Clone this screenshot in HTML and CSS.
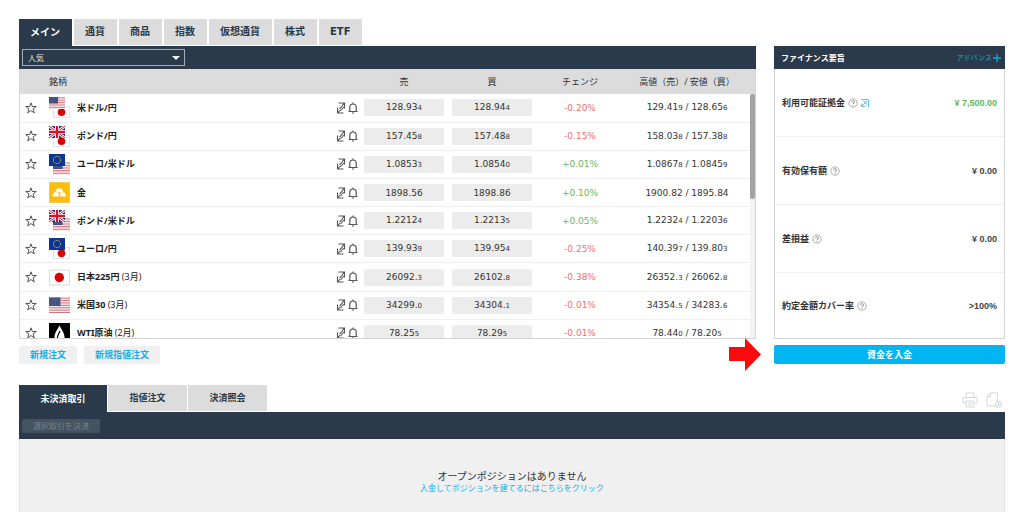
FILE: index.html
```html
<!DOCTYPE html>
<html lang="ja">
<head>
<meta charset="utf-8">
<title>トレード</title>
<link rel="stylesheet" href="styles.css">
</head>
<body>
<svg class="defs" aria-hidden="true">
  <symbol id="star" viewBox="0 0 12 12"><path d="M6 .8l1.300 3.700h4L8.100 6.900l1.200 4L6 8.600l-3.300 2.300 1.200-4L.7 4.500h4z" fill="none" stroke="#444" stroke-width=".9"/></symbol>
  <symbol id="expand" viewBox="0 0 10 12"><path d="M2.500 1h6v5.500M8.500 1L6.200 3.600M1.500 5.500V11h6M1.500 11l2.300-2.600M3.500 7.200l3-3.400M4.300 9L8 5" fill="none" stroke="#555" stroke-width="1.100"/></symbol>
  <symbol id="bell" viewBox="0 0 10 12"><path d="M.5 9.500h9M1.800 9.300V5.200a3.200 3.200 0 0 1 6.400 0v4.100M5 .5v1.500M4 11h2" fill="none" stroke="#555" stroke-width="1.200"/></symbol>
  <symbol id="us" viewBox="0 0 16 12"><path fill="#f3e4e6" d="M0 0h16v12H0z"/><path d="M0 .8h16M0 3.200h16M0 5.600h16M0 8h16M0 10.400h16" stroke="#d87f87"/><path fill="#3f4f7d" d="M0 0h9v6.500H0z"/><path d="M1 1.500h7.500M1 3.300h7.500M1 5.100h7.500" stroke="#67749a" stroke-width=".6" stroke-dasharray=".7 .8"/></symbol>
  <symbol id="jp" viewBox="0 0 17 12"><path fill="#fff" stroke="#d8d8de" stroke-width=".8" d="M.4.4h16.200v11.200H.4z"/><circle cx="8.500" cy="6.300" r="3.800" fill="#d80000"/></symbol>
  <symbol id="gb" viewBox="0 0 16 12"><path fill="#1c2f83" d="M0 0h16v12H0z"/><path d="M0 0l16 12M16 0L0 12" stroke="#fff" stroke-width="2.800"/><path d="M0 0l16 12M16 0L0 12" stroke="#d4142c" stroke-width="1"/><path d="M8 0v12M0 6h16" stroke="#fff" stroke-width="4"/><path d="M8 0v12M0 6h16" stroke="#d4142c" stroke-width="2.300"/></symbol>
  <symbol id="eu" viewBox="0 0 16 12"><path fill="#0a3596" d="M0 0h16v12H0z"/><circle cx="8" cy="6" r="3.600" fill="none" stroke="#c9bd3c" stroke-width="1" stroke-dasharray="1.300 .58"/></symbol>
  <symbol id="usd-jpy" viewBox="0 0 21 21"><use href="#jp" x="4" y="9" width="17" height="12"/><use href="#us" width="16" height="12"/></symbol>
  <symbol id="gbp-jpy" viewBox="0 0 21 21"><use href="#jp" x="4" y="9" width="17" height="12"/><use href="#gb" width="16" height="12"/></symbol>
  <symbol id="eur-jpy" viewBox="0 0 21 21"><use href="#jp" x="4" y="9" width="17" height="12"/><use href="#eu" width="16" height="12"/></symbol>
  <symbol id="eur-usd" viewBox="0 0 21 21"><use href="#us" x="4" y="8" width="17" height="13"/><use href="#eu" width="16" height="12"/></symbol>
  <symbol id="gbp-usd" viewBox="0 0 21 21"><use href="#us" x="4" y="8" width="17" height="13"/><use href="#gb" width="16" height="12"/></symbol>
  <symbol id="gold" viewBox="0 0 21 21"><path fill="#fdbd0b" stroke="#dcc58a" stroke-width=".5" d="M.2.2h20.600v20.600H.2z"/><path fill="#fff" d="M8 6.500h4.500l2 3.500H6.300zM5 10.300h4.300l1.200 4.200H3.300zM11 10.300h4.400l1.800 4.200h-5.700z"/></symbol>
  <symbol id="japan" viewBox="0 0 21 21"><path fill="#fff" stroke="#d4d4da" stroke-width=".9" d="M.5 3h20v15H.5z"/><circle cx="10.300" cy="10.500" r="4.700" fill="#d80000"/></symbol>
  <symbol id="usa" viewBox="0 0 21 21"><path fill="#f5e9eb" d="M0 2.500h21V18H0z"/><path d="M0 3.100h21M0 5.500h21M0 7.900h21M0 10.300h21M0 12.700h21M0 15.100h21M0 17.500h21" stroke="#d07880"/><path fill="#3f4f7d" d="M0 2.500h11.500V11H0z"/><path d="M1 4h10M1 5.700h10M1 7.400h10M1 9.100h10" stroke="#7481a5" stroke-width=".6" stroke-dasharray=".8 1"/></symbol>
  <symbol id="oil" viewBox="0 0 21 21"><path fill="#000" d="M0 0h21v21H0z"/><path fill="#fff" d="M10.500 2.500C12 6 15.500 10 15.500 14a5 5 0 0 1-10 0c0-4 3.500-8 5-11.500z"/><path d="M11 8c-1 3-3 4-2.500 8" fill="none" stroke="#000" stroke-width="1.200"/></symbol>
  <symbol id="help" viewBox="0 0 10 10"><circle cx="5" cy="5" r="4.200" fill="none" stroke="#999" stroke-width=".8"/><path d="M3.600 4.100c0-1.900 2.900-1.800 2.900-.1 0 1-1.400 1-1.400 2.100M5.100 6.900v.9" fill="none" stroke="#777" stroke-width=".9"/></symbol>
</svg>

<main class="page">
  <section class="market">
    <nav class="tabs">
      <button class="tab active">メイン</button><button class="tab">通貨</button><button class="tab">商品</button><button class="tab">指数</button><button class="tab">仮想通貨</button><button class="tab">株式</button><button class="tab">ETF</button>
    </nav>
    <div class="bar filter">
      <div class="picker">
        <select aria-label="カテゴリー"><option>人気</option></select>
        <svg class="caret" viewBox="0 0 8 4"><path fill="#fff" d="M0 0h8L4 4z"/></svg>
      </div>
    </div>
    <div class="list">
      <table class="quotes">
        <colgroup><col class="c-star"><col><col class="c-tools"><col class="c-price"><col class="c-price"><col class="c-change"><col class="c-range"></colgroup>
        <thead><tr><th></th><th class="name">銘柄</th><th></th><th>売</th><th>買</th><th>チェンジ</th><th>高値（売）/ 安値（買）</th></tr></thead>
        <tbody>
          <tr><td><svg class="star"><use href="#star"/></svg></td><td class="name"><div class="asset"><svg class="flag"><use href="#usd-jpy"/></svg><b>米ドル/円</b></div></td><td><div class="tools"><svg><use href="#expand"/></svg><svg><use href="#bell"/></svg></div></td><td><button class="price">128.93<small>4</small></button></td><td><button class="price">128.94<small>4</small></button></td><td class="down">-0.20%</td><td>129.41<small>9</small> / 128.65<small>6</small></td></tr>
          <tr><td><svg class="star"><use href="#star"/></svg></td><td class="name"><div class="asset"><svg class="flag"><use href="#gbp-jpy"/></svg><b>ポンド/円</b></div></td><td><div class="tools"><svg><use href="#expand"/></svg><svg><use href="#bell"/></svg></div></td><td><button class="price">157.45<small>8</small></button></td><td><button class="price">157.48<small>8</small></button></td><td class="down">-0.15%</td><td>158.03<small>8</small> / 157.38<small>8</small></td></tr>
          <tr><td><svg class="star"><use href="#star"/></svg></td><td class="name"><div class="asset"><svg class="flag"><use href="#eur-usd"/></svg><b>ユーロ/米ドル</b></div></td><td><div class="tools"><svg><use href="#expand"/></svg><svg><use href="#bell"/></svg></div></td><td><button class="price">1.0853<small>3</small></button></td><td><button class="price">1.0854<small>0</small></button></td><td class="up">+0.01%</td><td>1.0867<small>8</small> / 1.0845<small>9</small></td></tr>
          <tr><td><svg class="star"><use href="#star"/></svg></td><td class="name"><div class="asset"><svg class="flag"><use href="#gold"/></svg><b>金</b></div></td><td><div class="tools"><svg><use href="#expand"/></svg><svg><use href="#bell"/></svg></div></td><td><button class="price">1898.56</button></td><td><button class="price">1898.86</button></td><td class="up">+0.10%</td><td>1900.82 / 1895.84</td></tr>
          <tr><td><svg class="star"><use href="#star"/></svg></td><td class="name"><div class="asset"><svg class="flag"><use href="#gbp-usd"/></svg><b>ポンド/米ドル</b></div></td><td><div class="tools"><svg><use href="#expand"/></svg><svg><use href="#bell"/></svg></div></td><td><button class="price">1.2212<small>4</small></button></td><td><button class="price">1.2213<small>5</small></button></td><td class="up">+0.05%</td><td>1.2232<small>4</small> / 1.2203<small>6</small></td></tr>
          <tr><td><svg class="star"><use href="#star"/></svg></td><td class="name"><div class="asset"><svg class="flag"><use href="#eur-jpy"/></svg><b>ユーロ/円</b></div></td><td><div class="tools"><svg><use href="#expand"/></svg><svg><use href="#bell"/></svg></div></td><td><button class="price">139.93<small>9</small></button></td><td><button class="price">139.95<small>4</small></button></td><td class="down">-0.25%</td><td>140.39<small>7</small> / 139.80<small>3</small></td></tr>
          <tr><td><svg class="star"><use href="#star"/></svg></td><td class="name"><div class="asset"><svg class="flag"><use href="#japan"/></svg><span><b>日本225円</b> (3月)</span></div></td><td><div class="tools"><svg><use href="#expand"/></svg><svg><use href="#bell"/></svg></div></td><td><button class="price">26092.<small>3</small></button></td><td><button class="price">26102.<small>8</small></button></td><td class="down">-0.38%</td><td>26352.<small>3</small> / 26062.<small>8</small></td></tr>
          <tr><td><svg class="star"><use href="#star"/></svg></td><td class="name"><div class="asset"><svg class="flag"><use href="#usa"/></svg><span><b>米国30</b> (3月)</span></div></td><td><div class="tools"><svg><use href="#expand"/></svg><svg><use href="#bell"/></svg></div></td><td><button class="price">34299.<small>0</small></button></td><td><button class="price">34304.<small>1</small></button></td><td class="down">-0.01%</td><td>34354.<small>5</small> / 34283.<small>6</small></td></tr>
          <tr><td><svg class="star"><use href="#star"/></svg></td><td class="name"><div class="asset"><svg class="flag"><use href="#oil"/></svg><span><b>WTI原油</b> (2月)</span></div></td><td><div class="tools"><svg><use href="#expand"/></svg><svg><use href="#bell"/></svg></div></td><td><button class="price">78.25<small>5</small></button></td><td><button class="price">78.29<small>5</small></button></td><td class="down">-0.01%</td><td>78.44<small>0</small> / 78.20<small>5</small></td></tr>
        </tbody>
      </table>
      <div class="track"><div class="thumb"></div></div>
    </div>
    <div class="orders">
      <button class="order">新規注文</button>
      <button class="order">新規指値注文</button>
      <svg class="pointer" viewBox="0 0 32 33"><path fill="#fa0a0a" d="M0 9h16V0l16 16.500L16 33v-10H0z"/></svg>
    </div>
  </section>

  <aside class="finance">
    <div class="bar finance-head"><b>ファイナンス要旨</b><button class="advance">アドバンス<svg viewBox="0 0 8 8"><path d="M4 0v8M0 4h8" stroke="#1ba4de" stroke-width="1.300"/></svg></button></div>
    <dl class="summary">
      <div class="item"><dt>利用可能証拠金<svg class="help"><use href="#help"/></svg><svg class="jump" viewBox="0 0 8 8"><path d="M0 .6h7.400V8M0 7.400h4.500M.6 4.500v3M1 7l4-4M2.300 2.900h2.800v2.800" fill="none" stroke="#45b9ea" stroke-width=".9"/></svg></dt><dd class="gain">¥ 7,500.00</dd></div>
      <div class="item"><dt>有効保有額<svg class="help"><use href="#help"/></svg></dt><dd>¥ 0.00</dd></div>
      <div class="item"><dt>差損益<svg class="help"><use href="#help"/></svg></dt><dd>¥ 0.00</dd></div>
      <div class="item last"><dt>約定金額カバー率<svg class="help"><use href="#help"/></svg></dt><dd>&gt;100%</dd></div>
    </dl>
    <button class="deposit">資金を入金</button>
  </aside>

  <section class="positions">
    <div class="positions-top">
      <nav class="tabs wide">
        <button class="tab active">未決済取引</button><button class="tab">指値注文</button><button class="tab">決済照会</button>
      </nav>
      <div class="exports">
        <svg viewBox="0 0 16 16"><path d="M4 5V1h8v4M4 11H1V5.500h14V11h-3M4 9h8v6H4zM5.500 11h5M5.500 13h5" fill="none" stroke="#d3d9da"/></svg>
        <svg viewBox="0 0 16 16"><path d="M9 14H1V4.500L4.500 1h7v8M1.200 4.800h3.500V1.200" fill="none" stroke="#d3d9da"/><circle cx="12.500" cy="12.500" r="3" fill="#fff" stroke="#ccd2d4"/><path d="M12.500 10.500V14M11 12.500l1.500 1.500 1.500-1.500" fill="none" stroke="#ccd2d4" stroke-width=".9"/></svg>
      </div>
    </div>
    <div class="bar close-bar"><button class="close" disabled>選択取引を決済</button></div>
    <div class="empty">
      <p>オープンポジションはありません</p>
      <a href="#">入金してポジションを建てるにはこちらをクリック</a>
    </div>
  </section>
</main>
</body>
</html>
```

FILE: styles.css
```css
* { box-sizing: border-box; }
body {
  margin: 0;
  background: #fff;
  color: #333;
  font: 9px/12px "Noto Sans", "Noto Sans CJK JP", sans-serif;
}
button, select { font: inherit; color: inherit; border: 0; padding: 0; margin: 0; }
svg { display: block; flex: none; }
.defs { position: absolute; width: 0; height: 0; }

.page {
  display: grid;
  grid-template-columns: minmax(0, 1fr) 231px;
  column-gap: 18px;
  padding: 19px;
}

.tabs { display: flex; gap: 2px; height: 27px; }
.tab {
  height: 26px;
  padding: 0 12px 0 11px;
  background: #dcdcdc;
  color: #2a3948;
  font-family: "DejaVu Sans", "Noto Sans CJK JP", sans-serif;
  font-size: 10px;
  font-weight: 600;
}
.tab.active { height: 27px; background: #2a3a4a; color: #fff; font-weight: 700; }
.wide .tab { width: 79px; padding: 0; font-size: 9px; }
.wide .tab.active { width: 88px; }
.wide { gap: 1px; }

.bar { background: #2a3a4a; display: flex; align-items: center; }
.filter { height: 23px; padding: 0 3px; }
.picker { position: relative; width: 163px; }
.picker select {
  display: block;
  width: 100%;
  height: 17px;
  padding: 0 5px;
  appearance: none;
  border: 1px solid #a3abb2;
  background: transparent;
  color: #e4e7e9;
  font-size: 8px;
}
.caret { position: absolute; right: 5px; top: 7px; width: 8px; height: 4px; pointer-events: none; }

.list {
  position: relative;
  height: 270px;
  overflow: hidden;
  border: 1px solid #d4d4d4;
  border-top: 0;
  background: linear-gradient(#dcdcdc 25px, #fff 25px);
}
.quotes {
  width: calc(100% - 5px);
  height: 279px;
  table-layout: fixed;
  border-collapse: collapse;
  text-align: center;
}
.c-star { width: 29px; }
.c-tools { width: 24px; }
.c-price, .c-change { width: 88px; }
.c-range { width: 126px; }
.quotes th, .quotes td { padding: 0; white-space: nowrap; }
.quotes th { height: 25px; background: #dcdcdc; font-weight: 400; }
.quotes td {
  height: 28px;
  border-bottom: 1px solid #efefef;
  font-family: "DejaVu Sans", "Noto Sans CJK JP", sans-serif;
}
.quotes .name { text-align: left; font-family: inherit; }
.quotes small { font-size: 7px; }
.asset { display: flex; align-items: center; gap: 7px; color: #222; }
.flag { width: 21px; height: 21px; }
.star { width: 12px; height: 12px; margin-left: 5px; }
.tools { display: flex; gap: 2px; }
.tools svg { width: 10px; height: 12px; }
.price { width: 80px; height: 17px; border-radius: 2px; background: #ececec; vertical-align: middle; }
.down { color: #f47070; }
.up { color: #66b866; }
.track { position: absolute; top: 25px; right: 0; bottom: 0; width: 5px; background: #f3f3f3; }
.thumb { height: 43%; border-radius: 2px; background: #a3a3a3; }

.orders { position: relative; display: flex; gap: 7px; margin-top: 7px; }
.order {
  height: 18px;
  padding: 0 11px;
  border-radius: 2px;
  background: #f0f0f0;
  color: #10aeea;
  font-weight: 600;
}
.pointer { position: absolute; right: -5px; top: -8px; width: 32px; height: 33px; }

.finance { padding-top: 27px; }
.finance-head { height: 23px; justify-content: space-between; padding: 0 4px 0 7px; color: #fff; font-size: 8px; }
.advance { display: flex; align-items: center; gap: 1px; background: none; color: #1ba4de; font-size: 7px; }
.advance svg { width: 8px; height: 8px; }
.summary { margin: 0; border: 1px solid #d4d4d4; border-top: 0; }
.item {
  display: flex;
  align-items: center;
  justify-content: space-between;
  height: 68px;
  padding: 0 7px;
  border-bottom: 1px solid #efefef;
}
.item.last { height: 65px; border: 0; }
.item dt { display: flex; align-items: center; font-weight: 600; }
.item dd { margin: 0; color: #444; font-family: "Liberation Sans", sans-serif; font-weight: 700; }
.item .gain { color: #5cb85c; }
.help { width: 10px; height: 10px; margin-left: 3px; }
.jump { width: 8px; height: 8px; margin-left: 3px; }
.deposit {
  width: 100%;
  height: 19px;
  margin-top: 6px;
  border-radius: 2px;
  background: #00b5f1;
  color: #fff;
  font-weight: 700;
}

.positions { grid-column: 1 / -1; margin-top: 21px; }
.positions-top { display: flex; justify-content: space-between; }
.exports { display: flex; gap: 8px; padding: 7px 3px 0 0; }
.exports svg { width: 16px; height: 16px; }
.close-bar { height: 27px; padding: 0 3px; }
.close { width: 78px; height: 14px; border-radius: 2px; background: #435362; color: #75818c; font-size: 8px; }
.empty {
  padding: 31px 0 18px;
  border: 1px solid #e0e0e0;
  border-width: 0 1px;
  background: #f0f0f0;
  text-align: center;
}
.empty p { margin: 0; font-size: 10px; line-height: 12px; }
.empty a { display: block; color: #10aeea; font-size: 8px; line-height: 12px; text-decoration: none; }
```
